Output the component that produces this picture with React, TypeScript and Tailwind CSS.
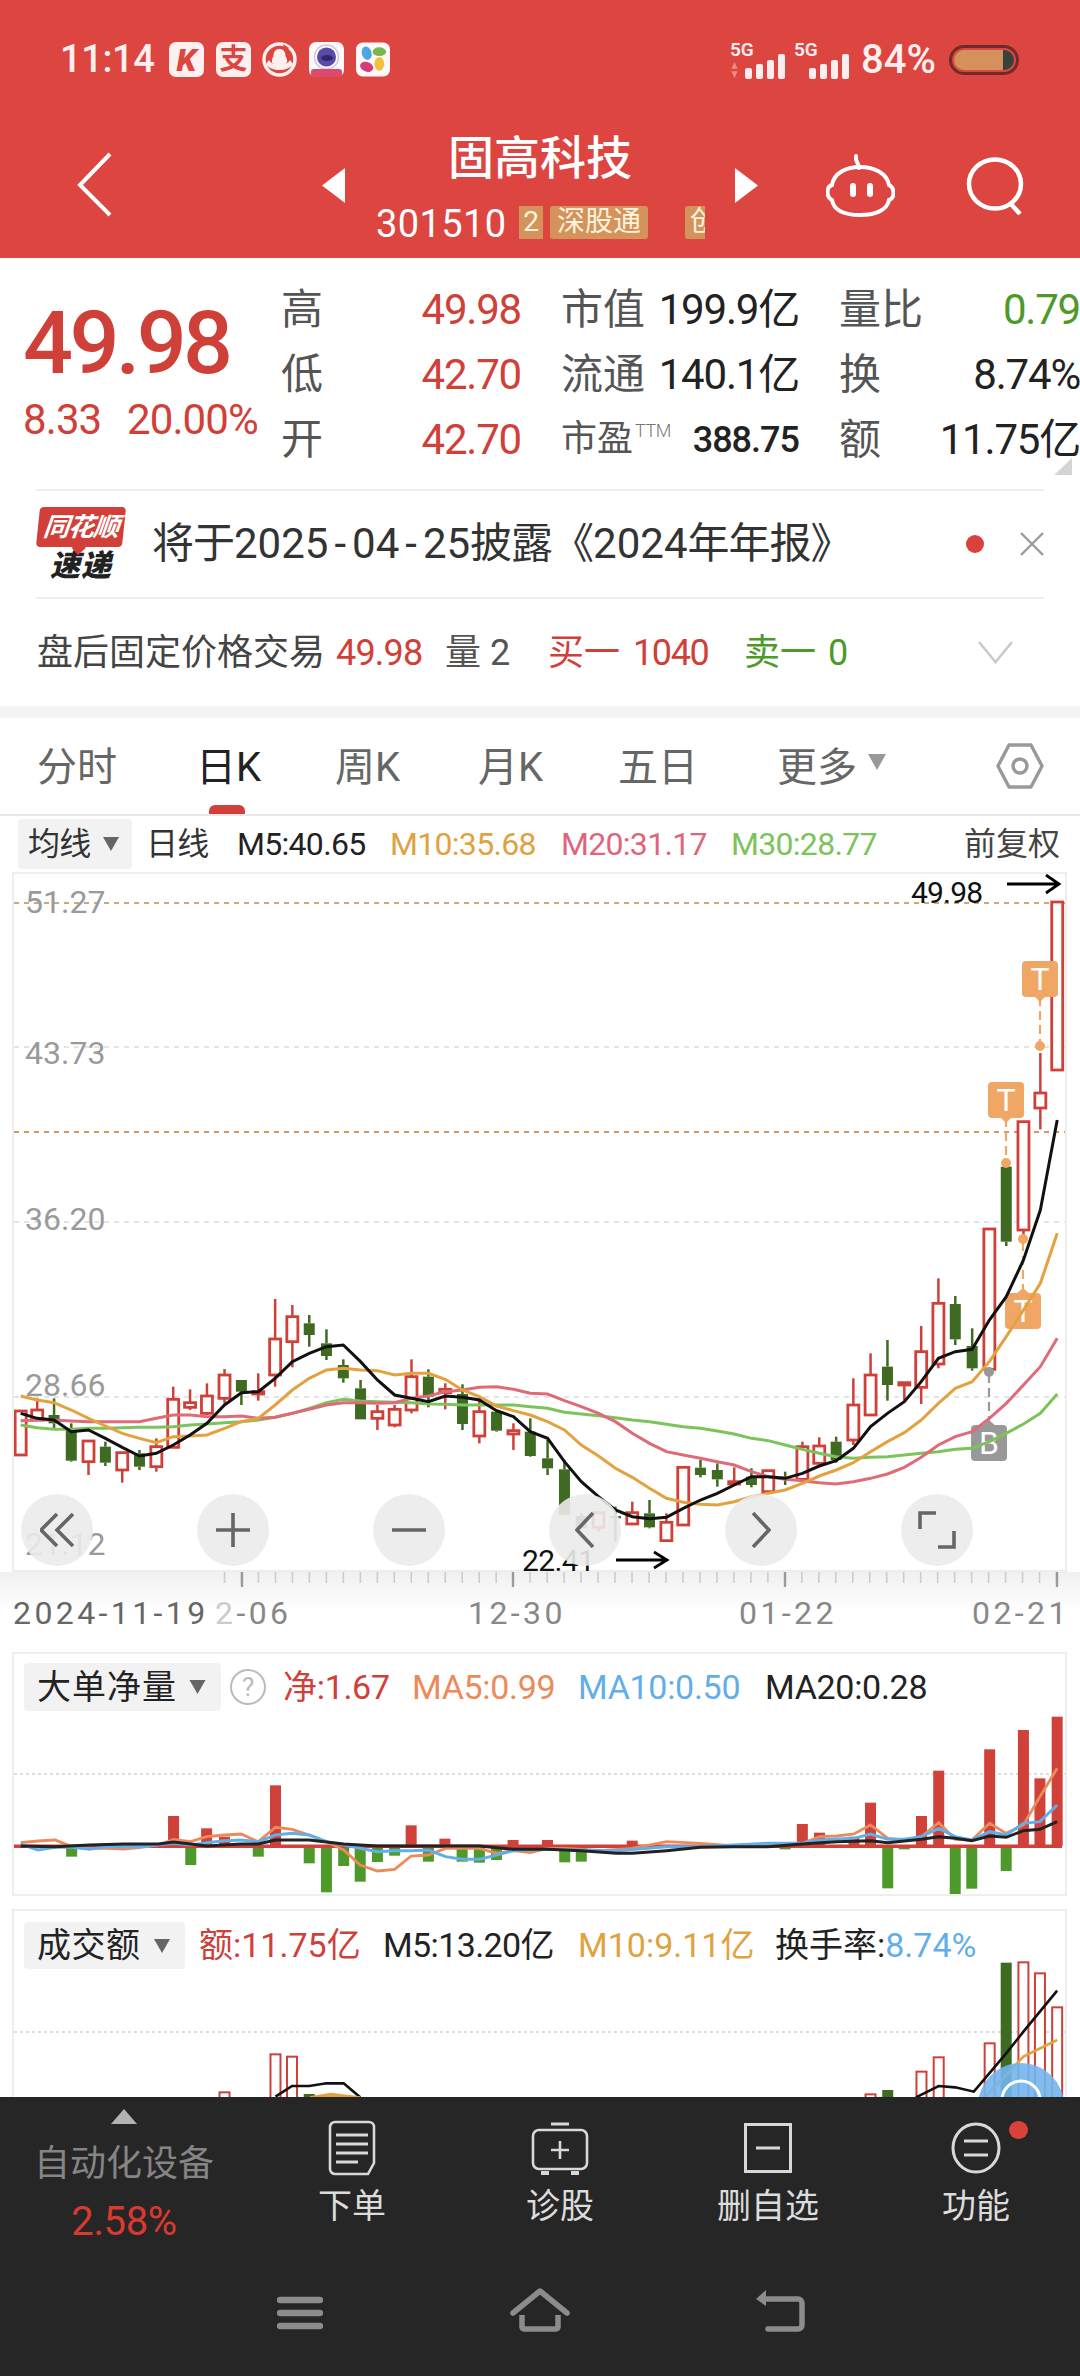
const cjk = "font-['Roboto','Noto_Sans_CJK_SC',sans-serif]";

// crop coordinates read off the reference: x4 for the left half, x5 for the right half
const x4 = (x: number) => x / 2.904;
const x5 = (x: number) => 540 + x / 2.904;
const yk = (y: number) => 1120 + y / 3;
const x6 = (x: number) => x / 1.452;
const y6 = (y: number) => 1640 + y / 3;

type Candle = [number, number, number, number, number, "r" | "g"];

const leftCandles: Candle[] = [
  [60, 873, 873, 1005, 1005, "r"],
  [108, 835, 870, 900, 900, "r"],
  [157, 835, 885, 910, 930, "g"],
  [207, 910, 930, 1022, 1025, "g"],
  [257, 960, 963, 1025, 1065, "r"],
  [306, 965, 980, 1028, 1038, "g"],
  [355, 998, 998, 1050, 1088, "r"],
  [405, 990, 1000, 1040, 1050, "g"],
  [454, 955, 980, 1040, 1055, "r"],
  [503, 800, 838, 982, 982, "r"],
  [552, 808, 848, 862, 870, "r"],
  [601, 790, 828, 880, 885, "r"],
  [652, 747, 765, 835, 850, "r"],
  [701, 780, 780, 815, 855, "g"],
  [750, 760, 815, 822, 842, "r"],
  [799, 537, 657, 765, 800, "r"],
  [849, 555, 590, 665, 742, "r"],
  [898, 585, 610, 645, 680, "g"],
  [948, 628, 670, 708, 720, "g"],
  [997, 718, 735, 775, 788, "g"],
  [1047, 780, 805, 898, 898, "g"],
  [1096, 855, 875, 895, 930, "r"],
  [1146, 855, 868, 915, 922, "r"],
  [1195, 718, 770, 870, 880, "r"],
  [1244, 748, 770, 830, 862, "g"],
  [1293, 790, 808, 818, 868, "r"],
  [1343, 793, 822, 912, 930, "g"],
  [1392, 835, 875, 948, 970, "r"],
  [1442, 870, 875, 932, 935, "g"],
  [1491, 910, 932, 942, 990, "r"],
  [1540, 895, 935, 1008, 1010, "g"],
];

const rightCandles: Candle[] = [
  [22, 960, 1015, 1045, 1065, "g"],
  [71, 1020, 1048, 1185, 1185, "g"],
  [120, 1180, 1188, 1225, 1228, "g"],
  [170, 1178, 1178, 1222, 1235, "r"],
  [219, 1160, 1188, 1195, 1265, "g"],
  [268, 1145, 1178, 1212, 1215, "r"],
  [318, 1140, 1180, 1222, 1225, "g"],
  [367, 1180, 1207, 1262, 1265, "r"],
  [416, 1042, 1042, 1215, 1215, "r"],
  [466, 1020, 1043, 1065, 1072, "g"],
  [515, 1030, 1050, 1078, 1100, "g"],
  [564, 1042, 1085, 1092, 1095, "r"],
  [614, 1045, 1070, 1095, 1102, "g"],
  [663, 1050, 1052, 1115, 1115, "r"],
  [712, 1055, 1070, 1075, 1095, "g"],
  [762, 965, 980, 1078, 1080, "r"],
  [811, 952, 978, 1030, 1032, "r"],
  [860, 950, 965, 1020, 1028, "g"],
  [910, 775, 855, 960, 975, "r"],
  [960, 700, 765, 885, 885, "r"],
  [1009, 660, 740, 795, 842, "g"],
  [1058, 788, 788, 795, 842, "r"],
  [1107, 618, 695, 802, 852, "r"],
  [1157, 475, 550, 732, 745, "r"],
  [1206, 528, 552, 658, 675, "g"],
  [1255, 625, 678, 745, 752, "g"],
  [1305, 325, 327, 748, 748, "r"],
  [1354, 140, 140, 365, 378, "g"],
  [1404, 5, 5, 330, 355, "r"],
  [1453, -201, -81, -36, 28, "r"],
  [1502, -654, -654, -150, -150, "r"],
];

const ma5L = [[60,880],[108,895],[157,900],[207,935],[257,930],[306,955],[355,982],[405,1008],[454,1000],[503,975],[552,945],[601,910],[652,855],[701,818],[750,815],[799,775],[849,725],[898,700],[948,680],[997,675],[1047,725],[1096,780],[1146,825],[1195,835],[1244,845],[1293,828],[1343,832],[1392,840],[1442,872],[1491,890],[1540,935]];
const ma5R = [[22,955],[71,1025],[120,1085],[170,1130],[219,1170],[268,1190],[318,1196],[367,1192],[416,1165],[466,1140],[515,1120],[564,1095],[614,1070],[663,1070],[712,1075],[762,1060],[811,1038],[860,1022],[910,985],[960,920],[1009,880],[1058,845],[1107,785],[1157,715],[1206,695],[1255,688],[1305,600],[1354,530],[1404,420],[1453,270],[1502,0]];
const ma10L = [[60,828],[108,840],[157,848],[207,870],[257,895],[306,918],[355,940],[405,955],[454,968],[503,950],[552,948],[601,945],[652,925],[701,905],[750,895],[799,855],[849,810],[898,775],[948,750],[997,745],[1047,750],[1096,752],[1146,765],[1195,760],[1244,760],[1293,778],[1343,810],[1392,830],[1442,858],[1491,872],[1540,885]];
const ma10R = [[22,905],[71,930],[120,975],[170,1008],[219,1045],[268,1072],[318,1105],[367,1135],[416,1147],[466,1153],[515,1155],[564,1145],[614,1130],[663,1120],[712,1110],[762,1090],[811,1068],[860,1050],[910,1028],[960,995],[1009,965],[1058,938],[1107,900],[1157,850],[1206,805],[1255,785],[1305,725],[1354,650],[1404,570],[1453,490],[1502,340]];
const ma20L = [[60,902],[108,900],[157,900],[207,903],[257,905],[306,905],[355,905],[405,905],[454,895],[503,885],[552,885],[601,890],[652,890],[701,888],[750,895],[799,892],[849,880],[898,868],[948,855],[997,848],[1047,848],[1096,850],[1146,848],[1195,835],[1244,828],[1293,815],[1343,810],[1392,802],[1442,800],[1491,808],[1540,820]];
const ma20R = [[22,822],[71,842],[120,860],[170,880],[219,905],[268,940],[318,970],[367,995],[416,1005],[466,1015],[515,1025],[564,1035],[614,1055],[663,1070],[712,1078],[762,1082],[811,1088],[860,1092],[910,1085],[960,1075],[1009,1062],[1058,1042],[1107,1012],[1157,975],[1206,950],[1255,935],[1305,895],[1354,850],[1404,795],[1453,740],[1502,655]];
const ma30L = [[60,915],[108,923],[157,928],[207,928],[257,925],[306,925],[355,923],[405,922],[454,922],[503,920],[552,915],[601,912],[652,908],[701,905],[750,900],[799,892],[849,880],[898,865],[948,848],[997,838],[1047,843],[1096,845],[1146,847],[1195,848],[1244,852],[1293,853],[1343,855],[1392,855],[1442,855],[1491,855],[1540,860]];
const ma30R = [[22,865],[71,877],[120,882],[170,887],[219,893],[268,900],[318,905],[367,913],[416,920],[466,925],[515,933],[564,942],[614,955],[663,962],[712,975],[762,988],[811,1000],[860,1010],[910,1015],[960,1012],[1009,1010],[1058,1005],[1107,1000],[1157,995],[1206,988],[1255,985],[1305,965],[1354,940],[1404,912],[1453,880],[1502,822]];

const klinePts = (l: number[][], r: number[][]) =>
  [...l.map(([x, y]) => `${x4(x)},${yk(y)}`), ...r.map(([x, y]) => `${x5(x)},${yk(y)}`)].join(" ");

const flowUp = [[252,528],[300,565],[326,590],[400,436],[597,556],[646,596],[745,600],[795,600],[918,602],[1165,552],[1190,578],[1240,590],[1264,488],[1338,528],[1363,392],[1437,328],[1486,270],[1510,415],[1535,230]];
const flowDown = [[104,650],[277,675],[375,650],[449,670],[474,757],[499,678],[523,725],[548,666],[573,647],[622,665],[671,665],[696,668],[721,660],[820,667],[844,665],[1140,628],[1289,745],[1313,628],[1387,768],[1411,746],[1461,693]];
const flowOrange = [[30,608],[55,603],[80,600],[104,620],[130,625],[155,625],[180,627],[205,622],[230,615],[252,598],[277,605],[300,590],[326,585],[350,582],[375,605],[400,562],[424,568],[449,585],[474,605],[499,630],[523,675],[548,693],[573,688],[597,648],[622,645],[647,625],[671,625],[696,625],[721,640],[745,632],[770,638],[795,625],[820,625],[844,628],[870,632],[918,625],[968,605],[1017,610],[1066,618],[1115,612],[1165,610],[1190,590],[1215,588],[1240,582],[1264,555],[1289,595],[1313,600],[1338,590],[1363,548],[1387,598],[1411,600],[1437,550],[1461,580],[1486,555],[1510,470],[1535,385]];
const flowBlue = [[30,612],[55,630],[80,622],[104,622],[130,628],[155,620],[205,620],[252,610],[277,615],[300,608],[326,602],[350,600],[375,605],[400,585],[424,580],[449,585],[474,605],[499,615],[523,625],[548,635],[573,632],[597,632],[622,630],[647,650],[671,658],[696,658],[721,645],[745,632],[795,628],[844,630],[895,632],[968,620],[1017,620],[1066,615],[1115,610],[1165,610],[1190,600],[1240,595],[1264,582],[1289,598],[1313,598],[1338,590],[1363,565],[1387,590],[1411,600],[1437,575],[1461,585],[1486,550],[1510,545],[1535,495]];
const flowBlack = [[30,618],[80,620],[130,615],[180,612],[230,612],[252,606],[277,612],[300,618],[350,612],[375,612],[400,600],[449,600],[499,612],[548,618],[647,618],[696,618],[745,628],[795,628],[844,632],[895,640],[918,640],[968,632],[1017,622],[1066,620],[1115,620],[1165,612],[1215,605],[1264,602],[1289,608],[1338,598],[1363,590],[1387,595],[1411,602],[1437,588],[1461,592],[1486,572],[1510,568],[1535,545]];

const pts6 = (p: number[][]) => p.map(([x, y]) => `${x6(x)},${y6(y)}`).join(" ");

const amountHollow = [[326,1357],[400,1243],[424,1250],[1264,1363],[1338,1295],[1363,1252],[1437,1210],[1486,967],[1510,1000],[1535,1102]];
const amountFilled = [[449,1362],[1289,1350],[1461,968]];

const RED = "#cf4038";
const GREEN = "#3e6a22";

function CandleMark({ x, c }: { x: number; c: Candle }) {
  const [, high, top, bottom, low, kind] = c;
  const color = kind === "r" ? RED : GREEN;
  const yTop = yk(top);
  const yBottom = yk(bottom);
  return (
    <g>
      <line x1={x} x2={x} y1={yk(high)} y2={yTop} stroke={color} strokeWidth={2.5} />
      <line x1={x} x2={x} y1={yBottom} y2={yk(low)} stroke={color} strokeWidth={2.5} />
      {kind === "r" ? (
        <rect x={x - 5.5} y={yTop} width={11} height={Math.max(yBottom - yTop, 1)} fill="#fff" stroke={color} strokeWidth={2.8} />
      ) : (
        <rect x={x - 5.5} y={yTop} width={11} height={yBottom - yTop} fill={color} />
      )}
    </g>
  );
}

function Marker({ x, top, label, color, dotY, up }: { x: number; top: number; label: string; color: string; dotY: number; up?: boolean }) {
  const boxH = 36;
  const lineFrom = up ? top : top + boxH;
  return (
    <g>
      <line x1={x} x2={x} y1={lineFrom} y2={dotY} stroke={color} strokeWidth={2.2} strokeDasharray="9 5" />
      <circle cx={x} cy={dotY} r={5} fill={color} />
      <rect x={x - 18} y={top} width={36} height={boxH} rx={4} fill={color} />
      {up ? <polygon points={`${x - 7},${top + 1} ${x},${top - 5} ${x + 7},${top + 1}`} fill={color} /> : <polygon points={`${x - 6},${top + boxH - 1} ${x},${top + boxH + 5} ${x + 6},${top + boxH - 1}`} fill={color} />}
      <text x={x} y={top + 29} textAnchor="middle" fontSize={32} fill="#fff" fontFamily="Roboto, sans-serif">
        {label}
      </text>
    </g>
  );
}

function KChart() {
  return (
    <svg viewBox="14 874 1051 696" className="block h-full w-full">
      <line x1={14} x2={1065} y1={903} y2={903} stroke="#c7ab78" strokeWidth={2} strokeDasharray="5 5" />
      <line x1={14} x2={1065} y1={1047} y2={1047} stroke="#dcdcdc" strokeWidth={1.5} strokeDasharray="5 5" />
      <line x1={14} x2={1065} y1={1132} y2={1132} stroke="#d6985f" strokeWidth={2} strokeDasharray="5 5" />
      <line x1={14} x2={1065} y1={1222} y2={1222} stroke="#dcdcdc" strokeWidth={1.5} strokeDasharray="5 5" />
      <line x1={14} x2={1065} y1={1397} y2={1397} stroke="#dcdcdc" strokeWidth={1.5} strokeDasharray="5 5" />

      {leftCandles.map((c) => (
        <CandleMark key={`l${c[0]}`} x={x4(c[0])} c={c} />
      ))}
      {rightCandles.map((c) => (
        <CandleMark key={`r${c[0]}`} x={x5(c[0])} c={c} />
      ))}

      <Marker x={1006} top={1082} label="T" color="#f0a766" dotY={1163} />
      <Marker x={1040} top={961} label="T" color="#f0a766" dotY={1046} />
      <Marker x={1023} top={1293} label="T" color="#f0a766" dotY={1239} up />
      <Marker x={989} top={1425} label="B" color="#999999" dotY={1372} up />

      <polyline points={klinePts(ma30L, ma30R)} fill="none" stroke="#7cc35c" strokeWidth={3} />
      <polyline points={klinePts(ma20L, ma20R)} fill="none" stroke="#df6a78" strokeWidth={3} />
      <polyline points={klinePts(ma10L, ma10R)} fill="none" stroke="#e3a23f" strokeWidth={3} />
      <polyline points={klinePts(ma5L, ma5R)} fill="none" stroke="#111111" strokeWidth={3} />

      <path d="M1007 884h50M1046 875l13 9-13 9" fill="none" stroke="#000" strokeWidth={2.8} />
      <path d="M616 1560h50M654 1552l13 8-13 8" fill="none" stroke="#000" strokeWidth={2.8} />
    </svg>
  );
}

function FlowChart() {
  return (
    <svg viewBox="14 1654 1051 240" className="absolute inset-0 h-full w-full">
      <line x1={14} x2={1065} y1={1774} y2={1774} stroke="#dddddd" strokeWidth={2} strokeDasharray="3 3" />
      {flowUp.map(([x, y]) => (
        <rect key={x} x={x6(x) - 5.5} y={y6(y)} width={11} height={1846 - y6(y)} fill="#d0413a" />
      ))}
      {flowDown.map(([x, y]) => (
        <rect key={x} x={x6(x) - 5.5} y={1846} width={11} height={y6(y) - 1846} fill="#4d9a2a" />
      ))}
      <rect x={12} y={1844.5} width={1050} height={3.5} fill="#d0413a" />
      <polyline points={pts6(flowOrange)} fill="none" stroke="#ec8a5a" strokeWidth={2.8} />
      <polyline points={pts6(flowBlue)} fill="none" stroke="#62aee8" strokeWidth={3} />
      <polyline points={pts6(flowBlack)} fill="none" stroke="#222222" strokeWidth={3} />
    </svg>
  );
}

function AmountChart() {
  return (
    <svg viewBox="14 1911 1051 186" className="absolute inset-0 h-[186px] w-full">
      <line x1={14} x2={1065} y1={2032} y2={2032} stroke="#dddddd" strokeWidth={2} strokeDasharray="3 3" />
      {amountHollow.map(([x, y]) => (
        <rect key={x} x={x6(x) - 5} y={y6(y)} width={10} height={220} fill="#fff" stroke="#cf4038" strokeWidth={2} />
      ))}
      {amountFilled.map(([x, y]) => (
        <rect key={x} x={x6(x) - 5.5} y={y6(y)} width={11} height={220} fill={GREEN} />
      ))}
      <polyline points={pts6([[400,1370],[424,1338],[449,1338],[474,1330],[499,1330],[523,1372]])} fill="none" stroke="#111" strokeWidth={2.6} />
      <polyline points={pts6([[450,1372],[480,1362],[523,1372]])} fill="#e3a23f" stroke="#e3a23f" strokeWidth={2.4} />
      <polyline points={pts6([[1430,1372],[1486,1250],[1535,1200]])} fill="none" stroke="#e3a23f" strokeWidth={2.6} />
      <polyline points={pts6([[1330,1372],[1363,1338],[1387,1342],[1414,1355],[1461,1240],[1486,1175],[1535,1052]])} fill="none" stroke="#111" strokeWidth={2.6} />
      <circle cx={1021} cy={2106} r={43} fill="#72b5ee" fillOpacity={0.9} />
      <circle cx={1021} cy={2100} r={19} fill="none" stroke="#fff" strokeWidth={3} />
    </svg>
  );
}

function Caret({ className }: { className: string }) {
  return (
    <svg viewBox="0 0 18 18" className={className}>
      <polygon points="0,1 18,1 9,17" fill="currentColor" />
    </svg>
  );
}

function Signal({ slow }: { slow?: boolean }) {
  return (
    <div className="relative h-[38px] w-[55px]">
      <span className="absolute left-0 top-[-1px] text-[19px] leading-[19px] font-semibold text-[#ffeeee] font-['Roboto',sans-serif]">5G</span>
      {slow && (
        <svg viewBox="0 0 10 26" className="absolute bottom-[1px] left-0 h-[16px] w-[9px]">
          <path d="M5 0l5 11H0zM5 26L0 15h10z" fill="#f28a85" />
        </svg>
      )}
      <div className="absolute bottom-0 right-0 flex items-end gap-[4px]">
        <span className="h-[11px] w-[7px] rounded-[2px] bg-[#ffeeee]" />
        <span className="h-[15px] w-[7px] rounded-[2px] bg-[#ffeeee]" />
        <span className="h-[19px] w-[7px] rounded-[2px] bg-[#ffeeee]" />
        <span className="h-[25px] w-[7px] rounded-[2px] bg-[#ffeeee]" />
      </div>
    </div>
  );
}

function StatusBar() {
  return (
    <div className="flex h-[35px] items-center">
      <span className="ml-[60px] w-[109px] text-[38px] font-medium leading-[35px] tracking-[-0.4px] text-[#fff0f0] font-['Roboto',sans-serif]">11:14</span>
      <div className="flex h-[35px] w-[35px] items-center justify-center rounded-[7px] bg-[#fff0f0] text-[32px] font-black italic leading-none text-[#dd4541] font-['Roboto',sans-serif]">K</div>
      <div className={`ml-[12px] flex h-[35px] w-[35px] items-center justify-center rounded-[7px] bg-[#fff0f0] text-[28px] font-bold leading-none text-[#dd4541] ${cjk}`}>支</div>
      <svg viewBox="0 0 35 35" className="ml-[11px] h-[35px] w-[35px]">
        <circle cx="17.5" cy="17.5" r="15.5" fill="none" stroke="#fff0f0" strokeWidth="3.4" />
        <path d="M4 22c5 8 22 8 27 0l-3-4c-2 6-19 6-21 0z" fill="#fff0f0" />
        <path d="M17.5 7c5 0 6 4 6 7 2 3 2 6 1 7-3 3-11 3-14 0-1-1-1-4 1-7 0-3 1-7 6-7z" fill="#fff0f0" />
        <path d="M21 2l6 4-4 4z" fill="#dd4541" />
      </svg>
      <svg viewBox="0 0 35 35" className="ml-[12px] h-[35px] w-[35px]">
        <rect width="35" height="35" rx="7" fill="#fff8f8" />
        <circle cx="17.5" cy="15" r="12" fill="none" stroke="#c9c8e8" strokeWidth="1.5" />
        <circle cx="17.5" cy="15" r="9.5" fill="#5b4aa8" />
        <ellipse cx="18" cy="16" rx="6" ry="3" fill="#2c2a6c" />
        <rect x="2" y="27" width="31" height="8" rx="3" fill="#dc4a6c" />
      </svg>
      <svg viewBox="0 0 35 35" className="ml-[12px] h-[35px] w-[34px]">
        <rect width="35" height="35" rx="7" fill="#fff8f8" />
        <ellipse cx="11" cy="11" rx="5" ry="7" fill="#4ba6e6" transform="rotate(-15 11 11)" />
        <ellipse cx="24" cy="9.5" rx="7" ry="4.5" fill="#78b84a" />
        <ellipse cx="11" cy="25" rx="7" ry="5" fill="#d83c78" transform="rotate(20 11 25)" />
        <ellipse cx="24" cy="22" rx="5" ry="7" fill="#f0c23c" />
      </svg>
      <div className="ml-[340px] flex items-center">
        <Signal slow />
        <div className="ml-[9px]">
          <Signal />
        </div>
        <span className="ml-[12px] w-[80px] text-[40px] leading-[35px] font-medium text-[#fff0f0] font-['Roboto',sans-serif]">84%</span>
        <div className="ml-[8px] flex h-[30px] w-[70px] overflow-hidden rounded-full border-[3px] border-[#6f2a2a] p-[2px]">
          <span className="h-full w-[49px] rounded-l-full bg-[#d5915c]" />
          <span className="h-full flex-1 rounded-r-full bg-[#37423d]" />
        </div>
      </div>
    </div>
  );
}

function NavBar() {
  return (
    <div className="mt-[53px] flex h-[128px] items-start">
      <svg viewBox="0 0 35 65" className="ml-[77px] mt-[22px] h-[65px] w-[35px]">
        <path d="M33 2L3 33l30 30" fill="none" stroke="#fff" strokeWidth="4" />
      </svg>
      <svg viewBox="0 0 23 35" className="ml-[210px] mt-[38px] h-[35px] w-[23px]">
        <polygon points="23,0 23,35 0,17.5" fill="#fff" />
      </svg>
      <div className="flex w-[390px] flex-col">
        <span className={`text-center text-[46px] font-medium leading-[56px] text-white ${cjk}`}>固高科技</span>
        <div className="ml-[31px] mt-[19px] flex h-[34px] w-[329px] items-center overflow-hidden">
          <span className="mt-[3px] w-[143px] shrink-0 text-[38px] leading-[34px] tracking-[0.4px] text-white font-['Roboto',sans-serif]">301510</span>
          <span className="flex h-[33px] w-[24px] shrink-0 items-center justify-center bg-[#d4935a] text-[28px] leading-none text-[#fff3df] font-['Roboto',sans-serif]">2</span>
          <span className={`ml-[7px] flex h-[33px] w-[98px] shrink-0 items-center justify-center rounded-[3px] bg-[#d4935a] text-[28px] leading-none text-[#fff3df] ${cjk}`}>深股通</span>
          <span className={`ml-[37px] flex h-[33px] w-[40px] shrink-0 items-center justify-start rounded-[3px] bg-[#d4935a] pl-[5px] text-[28px] leading-none text-[#fff3df] ${cjk}`}>创</span>
        </div>
      </div>
      <svg viewBox="0 0 23 35" className="mt-[38px] h-[35px] w-[23px]">
        <polygon points="0,0 0,35 23,17.5" fill="#fff" />
      </svg>
      <svg viewBox="0 0 69 64" className="ml-[68px] mt-[23px] h-[64px] w-[69px]">
        <path d="M33 15c0-5-4-6-3-12" fill="none" stroke="#fff" strokeWidth="4" strokeLinecap="round" />
        <path d="M6 32C8 20 20 14 34 14s27 6 29 18c6 3 6 13 0 15-2 11-15 15-29 15S8 58 6 47c-6-3-6-13 0-15z" fill="none" stroke="#fff" strokeWidth="4" />
        <rect x="24" y="30" width="6" height="14" rx="3" fill="#fff" />
        <rect x="41" y="30" width="6" height="14" rx="3" fill="#fff" />
      </svg>
      <svg viewBox="0 0 60 58" className="ml-[71px] mt-[27px] h-[58px] w-[60px]">
        <ellipse cx="29" cy="27" rx="26" ry="24.5" fill="none" stroke="#fff" strokeWidth="4.5" />
        <path d="M44 46l10 11" stroke="#fff" strokeWidth="4.5" />
      </svg>
    </div>
  );
}

function QuoteRow({ label, value, color }: { label: string; value: string; color: string }) {
  return (
    <div className="flex h-[65px] items-center justify-between">
      <span className={`text-[42px] leading-[65px] text-[#555] ${cjk}`}>{label}</span>
      <span className={`text-[42px] leading-[65px] tracking-[-1.2px] ${color} ${cjk}`}>{value}</span>
    </div>
  );
}

function Quote() {
  const red = "text-[#cf4038]";
  const dark = "text-[#222]";
  return (
    <div className="relative flex h-[231px] pl-[23px]">
      <div className="w-[258px] shrink-0 pt-[41px]">
        <div className="h-[88px] text-[88px] font-medium leading-[88px] tracking-[-3.6px] text-[#cf4038] font-['Roboto',sans-serif]">49.98</div>
        <div className="mt-[11px] flex h-[44px] items-center text-[42px] leading-[44px] tracking-[-0.9px] text-[#cf4038] font-['Roboto',sans-serif]">
          <span className="w-[104px]">8.33</span>
          <span>20.00%</span>
        </div>
      </div>
      <div className="flex pt-[19px]">
        <div className="w-[240px]">
          <QuoteRow label="高" value="49.98" color={red} />
          <QuoteRow label="低" value="42.70" color={red} />
          <QuoteRow label="开" value="42.70" color={red} />
        </div>
        <div className="ml-[40px] w-[238px]">
          <QuoteRow label="市值" value="199.9亿" color={dark} />
          <QuoteRow label="流通" value="140.1亿" color={dark} />
          <div className="flex h-[65px] items-center">
            <span className={`text-[36px] leading-[65px] text-[#555] ${cjk}`}>市盈</span>
            <span className="mb-[18px] ml-[2px] text-[18px] font-light tracking-[-0.5px] text-[#777] font-['Roboto',sans-serif]">TTM</span>
            <span className="ml-auto text-[36px] font-medium tracking-[-1px] text-[#222] font-['Roboto',sans-serif]">388.75</span>
          </div>
        </div>
        <div className="ml-[40px] w-[241px]">
          <QuoteRow label="量比" value="0.79" color="text-[#4d9a2a]" />
          <QuoteRow label="换" value="8.74%" color={dark} />
          <QuoteRow label="额" value="11.75亿" color={dark} />
        </div>
      </div>
      <svg viewBox="0 0 18 17" className="absolute right-[8px] top-[200px] h-[17px] w-[18px]">
        <polygon points="18,0 18,17 0,17" fill="#d4d4d4" />
      </svg>
    </div>
  );
}

function NewsRow() {
  const digits = "tracking-[0px]";
  const dash = "mx-[6px]";
  return (
    <div className="flex h-[106px] items-center">
      <div className="ml-[37px] flex w-[88px] shrink-0 flex-col items-center">
        <div className="relative flex h-[40px] w-[86px] -skew-x-6 items-center justify-center rounded-[4px] bg-[#d23f38]">
          <span className={`text-[26px] font-bold italic leading-none tracking-[-1px] text-white ${cjk}`}>同花顺</span>
          <span className="absolute -bottom-[6px] left-[38px] h-[10px] w-[10px] rotate-45 bg-[#d23f38]" />
        </div>
        <span className={`mt-[4px] h-[30px] text-[30px] font-black italic leading-[30px] tracking-[1px] text-[#222] ${cjk}`}>速递</span>
      </div>
      <span className={`ml-[27px] w-[814px] shrink-0 whitespace-nowrap text-[42px] leading-[50px] tracking-[-1px] text-[#333] ${cjk}`}>
        将于<span className={digits}>2025<span className={dash}>-</span>04<span className={dash}>-</span>25</span>披露《<span className={digits}>2024</span>年年报》
      </span>
      <span className="h-[18px] w-[18px] shrink-0 rounded-full bg-[#d9413a]" />
      <svg viewBox="0 0 24 24" className="ml-[36px] h-[24px] w-[24px] shrink-0">
        <path d="M1 1l22 22M23 1L1 23" stroke="#9a9a9a" strokeWidth="2.4" />
      </svg>
    </div>
  );
}

function AfterHours() {
  return (
    <div className={`flex h-[107px] items-center text-[36px] leading-[40px] ${cjk}`}>
      <span className="ml-[37px] w-[299px] text-[#444]">盘后固定价格交易</span>
      <span className="w-[109px] tracking-[-0.8px] text-[#cf4038]">49.98</span>
      <span className="w-[45px] text-[#555]">量</span>
      <span className="w-[58px] text-[#555]">2</span>
      <span className="w-[85px] text-[#cf4038]">买一</span>
      <span className="w-[111px] tracking-[-1.4px] text-[#cf4038]">1040</span>
      <span className="w-[84px] text-[#4d9a2a]">卖一</span>
      <span className="w-[150px] text-[#4d9a2a]">0</span>
      <svg viewBox="0 0 35 23" className="h-[23px] w-[35px]">
        <path d="M1 1l16.500 20L34 1" fill="none" stroke="#c8c8c8" strokeWidth="2.4" />
      </svg>
    </div>
  );
}

function Tabs() {
  const tab = `text-[40px] leading-[48px] ${cjk}`;
  return (
    <div className="relative flex h-[98px] items-center border-b-2 border-[#e8e8e8] pt-[4px]">
      <span className={`ml-[37px] w-[159px] text-[#666] ${tab}`}>分时</span>
      <span className={`w-[139px] text-[#222] ${tab}`}>日K</span>
      <span className={`w-[143px] text-[#666] ${tab}`}>周K</span>
      <span className={`w-[140px] text-[#666] ${tab}`}>月K</span>
      <span className={`w-[159px] text-[#666] ${tab}`}>五日</span>
      <span className={`w-[89px] text-[#666] ${tab}`}>更多</span>
      <Caret className="mb-[12px] h-[18px] w-[22px] text-[#999]" />
      <svg viewBox="0 0 48 46" className="mb-[4px] ml-[108px] h-[46px] w-[48px]">
        <path d="M13 2h22l11 21-11 21H13L2 23z" fill="none" stroke="#999" strokeWidth="3.4" strokeLinejoin="round" />
        <circle cx="24" cy="23" r="7" fill="none" stroke="#999" strokeWidth="3.4" />
      </svg>
      <span className="absolute bottom-0 left-[209px] h-[9px] w-[36px] rounded-t-[6px] bg-[#d23f38]" />
    </div>
  );
}

function Legend() {
  return (
    <div className={`flex h-[56px] items-center text-[32px] leading-[40px] tracking-[-0.7px] ${cjk}`}>
      <div className="ml-[18px] flex h-[50px] w-[114px] items-center rounded-[4px] bg-[#f2f2f2] pl-[10px] text-[#333]">
        <span className="w-[74px]">均线</span>
        <Caret className="h-[16px] w-[18px] text-[#666]" />
      </div>
      <span className="ml-[14px] w-[91px] text-[#333]">日线</span>
      <span className="w-[153px] text-[#222]">M5:40.65</span>
      <span className="w-[171px] text-[#e0a23f]">M10:35.68</span>
      <span className="w-[170px] text-[#e0647a]">M20:31.17</span>
      <span className="w-[233px] text-[#7cc35c]">M30:28.77</span>
      <span className="text-[#444] tracking-[0px]">前复权</span>
    </div>
  );
}

function AxisLabel({ className, children }: { className: string; children: string }) {
  return <span className={`absolute text-[32px] leading-[32px] text-[#9a9a9a] font-['Roboto',sans-serif] ${className}`}>{children}</span>;
}

function ChartButton({ children }: { children: React.ReactNode }) {
  return <div className="flex h-[72px] w-[72px] items-center justify-center rounded-full bg-[#ebebeb]/90">{children}</div>;
}

function ChartButtons() {
  const stroke = { fill: "none", stroke: "#666", strokeWidth: 3.6 };
  return (
    <div className="absolute left-[7px] top-[620px] flex w-[952px] justify-between">
      <ChartButton>
        <svg viewBox="0 0 34 34" className="h-[34px] w-[34px]">
          <path d="M17 1L1 17l16 16M33 1L17 17l16 16" {...stroke} />
        </svg>
      </ChartButton>
      <ChartButton>
        <svg viewBox="0 0 34 34" className="h-[34px] w-[34px]">
          <path d="M0 17h34M17 0v34" {...stroke} />
        </svg>
      </ChartButton>
      <ChartButton>
        <svg viewBox="0 0 34 34" className="h-[34px] w-[34px]">
          <path d="M0 17h34" {...stroke} />
        </svg>
      </ChartButton>
      <ChartButton>
        <svg viewBox="0 0 20 36" className="h-[36px] w-[20px]">
          <path d="M18 1L2 18l16 17" {...stroke} />
        </svg>
      </ChartButton>
      <ChartButton>
        <svg viewBox="0 0 20 36" className="h-[36px] w-[20px]">
          <path d="M2 1l16 17L2 35" {...stroke} />
        </svg>
      </ChartButton>
      <ChartButton>
        <svg viewBox="0 0 38 38" className="h-[38px] w-[38px]">
          <path d="M2 18V2h16M36 20v16H20" {...stroke} />
        </svg>
      </ChartButton>
    </div>
  );
}

function PriceChart() {
  return (
    <div className="relative ml-[12px] h-[700px] w-[1055px] border-2 border-[#eeeeee]">
      <KChart />
      <AxisLabel className="left-[11px] top-[12px]">51.27</AxisLabel>
      <AxisLabel className="left-[11px] top-[163px]">43.73</AxisLabel>
      <AxisLabel className="left-[11px] top-[329px]">36.20</AxisLabel>
      <AxisLabel className="left-[11px] top-[495px]">28.66</AxisLabel>
      <AxisLabel className="left-[11px] top-[654px]">21.12</AxisLabel>
      <span className="absolute left-[897px] top-[5px] text-[30px] leading-[28px] tracking-[-0.8px] text-[#111] font-['Roboto',sans-serif]">49.98</span>
      <span className="absolute left-[508px] top-[673px] text-[30px] leading-[28px] tracking-[-0.6px] text-[#111] font-['Roboto',sans-serif]">22.41</span>
      <ChartButtons />
    </div>
  );
}

function TimeAxis() {
  const ticks = Array.from({ length: 50 }, (_, i) => 224.5 + i * 16.98);
  return (
    <div className="h-[80px] bg-gradient-to-b from-[#f0f0f0] via-white to-white">
      <svg viewBox="0 0 1080 18" className="block h-[18px] w-[1080px]">
        {ticks.map((x) => (
          <line key={x} x1={x} x2={x} y1={0} y2={11} stroke="#cccccc" strokeWidth={1.6} />
        ))}
        {[242, 513, 785, 1057].map((x) => (
          <line key={x} x1={x} x2={x} y1={0} y2={15} stroke="#999999" strokeWidth={2.4} />
        ))}
      </svg>
      <div className="mt-[5px] flex text-[32px] leading-[36px] tracking-[3.4px] font-['Roboto',sans-serif]">
        <span className="ml-[13px] w-[202px] shrink-0 whitespace-nowrap text-[#666]">2024-11-19</span>
        <span className="w-[253px] text-[#888]">
          <span className="text-[#ccc]">2</span>-06
        </span>
        <span className="w-[271px] text-[#888]">12-30</span>
        <span className="w-[233px] text-[#888]">01-22</span>
        <span className="text-[#888]">02-21</span>
      </div>
    </div>
  );
}

function FlowPanel() {
  return (
    <div className="relative ml-[12px] h-[244px] w-[1055px] border-2 border-[#eeeeee]">
      <FlowChart />
      <div className={`relative mt-[9px] flex h-[48px] items-center text-[34px] leading-[48px] tracking-[-0.3px] ${cjk}`}>
        <div className="ml-[10px] flex h-[48px] w-[197px] items-center rounded-[4px] bg-[#f2f2f2] pl-[13px] text-[#222]">
          <span className="w-[151px] tracking-[1px]">大单净量</span>
          <Caret className="h-[16px] w-[19px] text-[#666]" />
        </div>
        <div className="ml-[9px] flex h-[36px] w-[36px] items-center justify-center rounded-full border-2 border-[#bbb] text-[26px] text-[#bbb]">?</div>
        <span className="ml-[17px] w-[129px] text-[#cf4038]">净:1.67</span>
        <span className="w-[166px] text-[#ec8a5a]">MA5:0.99</span>
        <span className="w-[187px] text-[#62aee8]">MA10:0.50</span>
        <span className="text-[#222]">MA20:0.28</span>
      </div>
    </div>
  );
}

function AmountPanel() {
  return (
    <div className="relative ml-[12px] mt-[13px] h-[240px] w-[1055px] border-2 border-[#eeeeee]">
      <AmountChart />
      <div className={`relative mt-[11px] flex h-[47px] items-center text-[34px] leading-[47px] tracking-[0px] ${cjk}`}>
        <div className="ml-[10px] flex h-[47px] w-[161px] items-center rounded-[4px] bg-[#f2f2f2] pl-[13px] text-[#222]">
          <span className="w-[116px] tracking-[0.5px]">成交额</span>
          <Caret className="h-[16px] w-[18px] text-[#666]" />
        </div>
        <span className="ml-[14px] w-[184px] text-[#cf4038]">额:11.75亿</span>
        <span className="w-[195px] tracking-[-0.6px] text-[#222]">M5:13.20亿</span>
        <span className="w-[197px] text-[#e0a23f]">M10:9.11亿</span>
        <span className="text-[#222]">换手率:</span>
        <span className="text-[#62aee8]">8.74%</span>
      </div>
    </div>
  );
}

function ToolItem({ label, children }: { label: string; children: React.ReactNode }) {
  return (
    <div className="relative flex w-[208px] flex-col items-center">
      <div className="flex h-[56px] items-center">{children}</div>
      <span className={`mt-[10px] text-[34px] leading-[40px] text-[#dcdcdc] ${cjk}`}>{label}</span>
    </div>
  );
}

function Toolbar() {
  const ic = { fill: "none", stroke: "#d8d8d8", strokeWidth: 2.6 };
  return (
    <div className="h-[279px] bg-[#262626]">
      <div className="flex h-[183px]">
        <div className="flex w-[248px] shrink-0 flex-col items-center">
          <svg viewBox="0 0 26 15" className="mt-[12px] h-[15px] w-[26px]">
            <polygon points="13,0 26,15 0,15" fill="#b3b3b3" />
          </svg>
          <span className={`mt-[18px] text-[36px] leading-[44px] text-[#858585] ${cjk}`}>自动化设备</span>
          <span className="mt-[16px] text-[40px] leading-[40px] tracking-[-0.4px] text-[#d93a30] font-['Roboto',sans-serif]">2.58%</span>
        </div>
        <div className="flex pt-[23px]">
          <ToolItem label="下单">
            <svg viewBox="0 0 48 56" className="h-[56px] w-[48px]">
              <path d="M7 2h34a5 5 0 0 1 5 5v36l-6 11H7a5 5 0 0 1-5-5V7a5 5 0 0 1 5-5z" {...ic} />
              <path d="M8 15h32M8 24h32M8 33h32M8 42h22" {...ic} strokeWidth={3} />
            </svg>
          </ToolItem>
          <ToolItem label="诊股">
            <svg viewBox="0 0 58 54" className="h-[54px] w-[58px]">
              <path d="M20 3h18" {...ic} strokeWidth={3} />
              <rect x="2" y="9" width="54" height="39" rx="6" {...ic} />
              <path d="M10 50v4h8v-4M40 50v4h8v-4" fill="#d8d8d8" />
              <path d="M29 20v18M20 29h18" {...ic} />
            </svg>
          </ToolItem>
          <ToolItem label="删自选">
            <svg viewBox="0 0 48 50" className="h-[50px] w-[48px]">
              <rect x="1.500" y="1.500" width="45" height="47" {...ic} strokeWidth={3} />
              <path d="M12 25h24" {...ic} strokeWidth={3} />
            </svg>
          </ToolItem>
          <ToolItem label="功能">
            <svg viewBox="0 0 50 52" className="h-[52px] w-[50px]">
              <ellipse cx="25" cy="26" rx="23" ry="24" {...ic} strokeWidth={3} />
              <path d="M13 19h24M13 33h24" {...ic} strokeWidth={3} />
            </svg>
            <span className="absolute left-[137px] top-[1px] h-[18px] w-[19px] rounded-full bg-[#d9413a]" />
          </ToolItem>
        </div>
      </div>
      <div className="flex h-[96px] items-start pt-[8px]">
        <svg viewBox="0 0 46 36" className="ml-[277px] mt-[7px] h-[36px] w-[46px]">
          <path d="M3 5h40M3 18h40M3 31h40" stroke="#8c8c8c" strokeWidth="6.400" strokeLinecap="round" />
        </svg>
        <svg viewBox="0 0 60 44" className="ml-[187px] h-[44px] w-[60px]">
          <path d="M3 25L30 3l27 22" fill="none" stroke="#8c8c8c" strokeWidth="5.500" strokeLinecap="round" strokeLinejoin="round" />
          <path d="M12 27v12a2 2 0 0 0 2 2h32a2 2 0 0 0 2-2V27" fill="none" stroke="#8c8c8c" strokeWidth="5.500" />
        </svg>
        <svg viewBox="0 0 50 42" className="ml-[186px] mt-[2px] h-[42px] w-[50px]">
          <path d="M6 9h36a4 4 0 0 1 4 4v22a4 4 0 0 1-4 4H12" fill="none" stroke="#8c8c8c" strokeWidth="5.500" strokeLinecap="round" />
          <polygon points="0,9 10,0 10,16" fill="#8c8c8c" />
        </svg>
      </div>
    </div>
  );
}

export default function App() {
  return (
    <div className="flex h-[2376px] w-[1080px] flex-col overflow-hidden bg-white">
      <header className="h-[258px] shrink-0 bg-[#dd4541] pt-[42px]">
        <StatusBar />
        <NavBar />
      </header>
      <Quote />
      <div className="mx-[36px] h-[2px] bg-[#eeeeee]" />
      <NewsRow />
      <div className="mx-[36px] h-[2px] bg-[#eeeeee]" />
      <AfterHours />
      <div className="h-[12px] shrink-0 bg-[#f4f4f4]" />
      <Tabs />
      <Legend />
      <main className="min-h-0 flex-1 overflow-hidden">
        <PriceChart />
        <TimeAxis />
        <FlowPanel />
        <AmountPanel />
      </main>
      <Toolbar />
    </div>
  );
}
